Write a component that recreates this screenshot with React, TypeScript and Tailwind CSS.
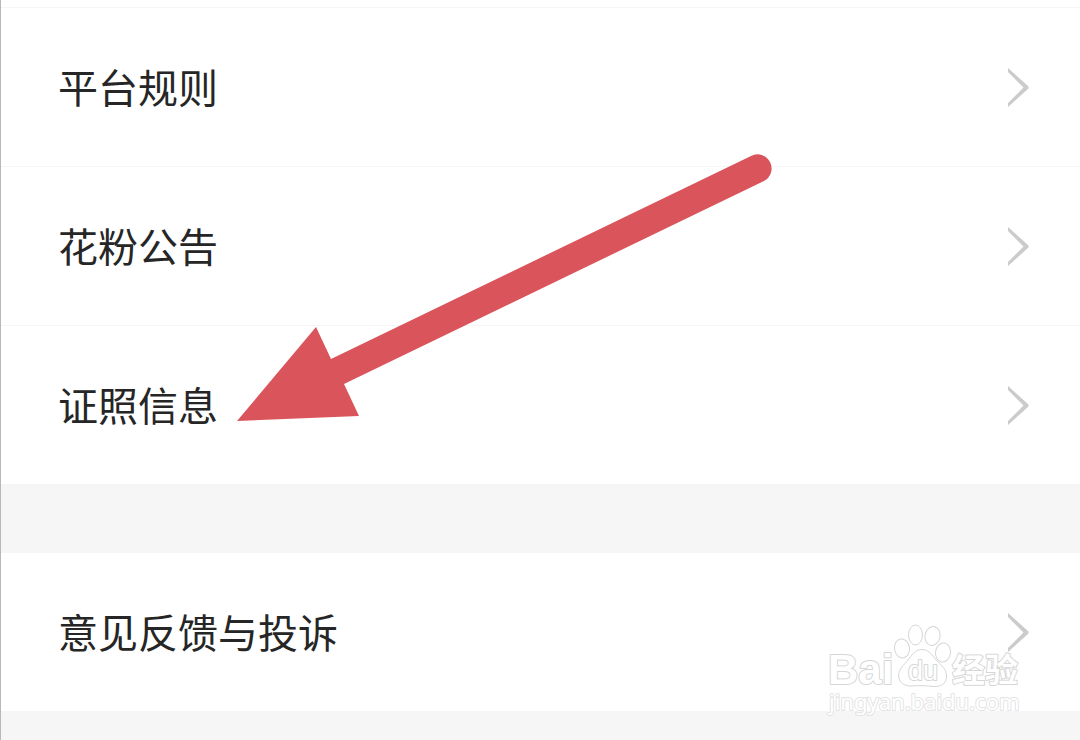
const RULES = [
  { label: "平台规则", href: "#rules" },
  { label: "花粉公告", href: "#notice" },
  { label: "证照信息", href: "#license" },
];

const SUPPORT = [{ label: "意见反馈与投诉", href: "#feedback" }];

type Item = { label: string; href: string };

function Chevron() {
  return (
    <svg className="w-6 h-10 shrink-0" viewBox="0 0 24 40" fill="none" aria-hidden="true">
      <path d="M0 1V5L15.500 20.500 0 36V40L20.500 21.500V19.500Z" fill="#cbcbcb" />
    </svg>
  );
}

function MenuGroup({ items }: { items: Item[] }) {
  return (
    <ul className="bg-white divide-y divide-[#f5f5f5]">
      {items.map((item) => (
        <li key={item.href}>
          <a href={item.href} className="flex items-center justify-between h-[158px] pl-[57px] pr-12">
            <span className="text-[40px] leading-[60px] pb-0.5 text-[#262626]">{item.label}</span>
            <Chevron />
          </a>
        </li>
      ))}
    </ul>
  );
}

function Arrow() {
  return (
    <svg
      className="absolute left-[236px] top-[152px] w-[536px] h-[272px] pointer-events-none"
      viewBox="236 152 536 272"
      aria-hidden="true"
    >
      <path
        d="M237 421 316 327 331 359 751 156A14 14 0 0 1 764 181L344 384 359 416Z"
        fill="#da555b"
      />
    </svg>
  );
}

function Watermark() {
  return (
    <svg
      className="absolute right-[54px] top-[620px] w-[202px] h-[100px] pointer-events-none"
      viewBox="824 620 202 100"
      fill="white"
      stroke="#d6d6d6"
      strokeWidth="1"
      strokeLinejoin="round"
    >
      <ellipse cx="902" cy="648.5" rx="7.5" ry="9.5" transform="rotate(-8 902 648.5)" />
      <ellipse cx="915.5" cy="635" rx="7" ry="10" />
      <ellipse cx="932.5" cy="636" rx="7.5" ry="9.5" transform="rotate(12 932.5 636)" />
      <ellipse cx="943" cy="652.5" rx="7.5" ry="9.5" transform="rotate(8 943 652.5)" />
      <path d="M922 649.500C929 649.500 932 655 936 660C941 665 947 669 946.500 677C946 684 940 687 934 686.500C926 686 920 685 912 686C904 686.500 899 682 898.500 676C898.500 669 904 665 908 660C912 655 915 649.500 922 649.500Z" />
      <g style={{ paintOrder: "stroke" }} strokeWidth="2">
        <text x="828" y="684" fontFamily="Liberation Sans, sans-serif" fontWeight="700" fontSize="42">Bai</text>
        <text x="952" y="682" fontFamily="Noto Sans CJK SC, sans-serif" fontWeight="700" fontSize="33">经验</text>
        <text x="908" y="680" fontFamily="Liberation Sans, sans-serif" fontSize="27">du</text>
        <text x="829" y="710" stroke="#e4e4e4" fontFamily="Noto Sans, sans-serif" fontSize="22">jingyan.baidu.com</text>
      </g>
    </svg>
  );
}

export default function App() {
  return (
    <div className="relative min-h-screen bg-[#f6f6f6] border-l border-[#b8b8b8] font-['Noto_Sans_CJK_SC',sans-serif]">
      <div className="h-2 bg-white border-b border-[#f5f5f5]" />
      <MenuGroup items={RULES} />
      <div className="h-[69px]" />
      <MenuGroup items={SUPPORT} />
      <div className="absolute inset-y-0 -left-px pointer-events-none">
        <Arrow />
      </div>
      <Watermark />
    </div>
  );
}
